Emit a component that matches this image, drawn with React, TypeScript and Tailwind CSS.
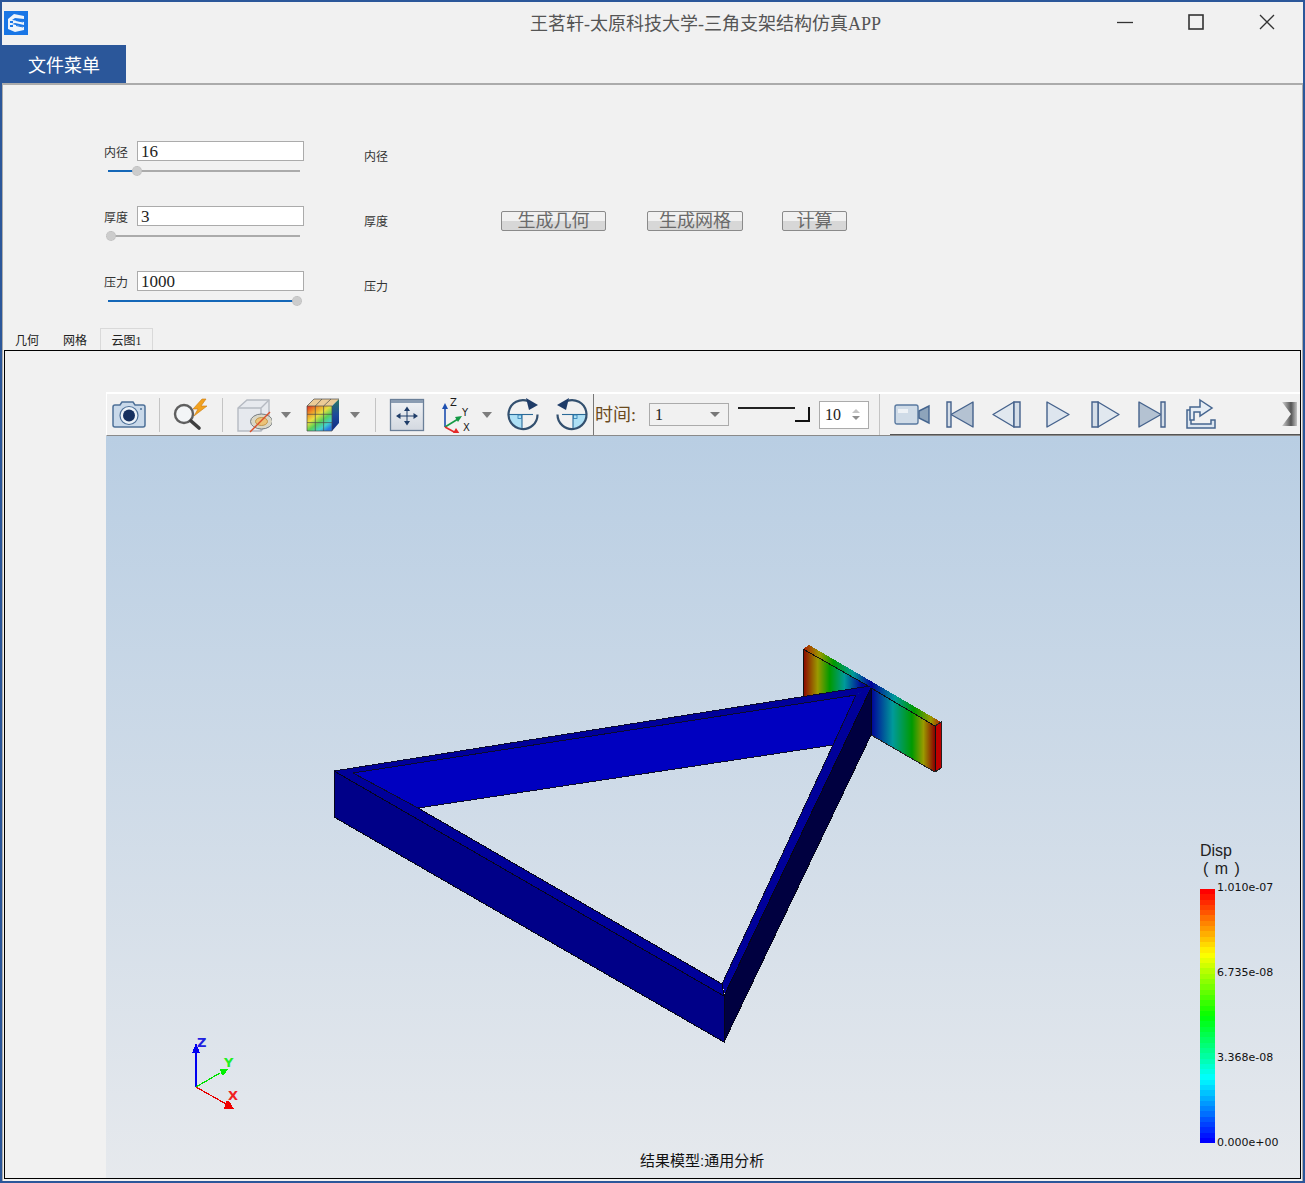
import React from "react";

const serif = "font-['Liberation_Serif','Noto_Sans_CJK_SC',serif]";
const sans = "font-['Liberation_Sans','Noto_Sans_CJK_SC',sans-serif]";

const Caret = ({ ml }: { ml: string }) => (
  <div className={`${ml} w-0 h-0 border-x-[5px] border-x-transparent border-t-[6px] border-t-[#7d7d7d]`} />
);

const Sep = ({ ml }: { ml: string }) => <div className={`${ml} w-px h-[34px] bg-[#c4c4c4]`} />;

const Logo = () => (
  <svg width="24" height="24" viewBox="0 0 24 24" shapeRendering="crispEdges">
    <rect width="24" height="24" fill="#1976e6" />
    <path d="M4 8 L10 3 L20 5 L20 8 L11 7 L8 9 L20 11 L20 14 L11 12 L8 13 L20 16 L20 19 L11 21 L4 18 Z" fill="#eef4fb" shapeRendering="auto" />
    <path d="M6 10h3v2H6zM6 14h3v2H6z" fill="#1976e6" />
    <path d="M12 9.5l7 1.5M12 14.5l7 1.5" stroke="#1976e6" strokeWidth="1" shapeRendering="auto" />
  </svg>
);

const CameraIcon = () => (
  <svg width="36" height="36" viewBox="0 0 36 36">
    <path d="M2 10 Q2 8 4 8 H9 L11 5 H22 L24 8 H32 Q34 8 34 10 V28 Q34 30 32 30 H4 Q2 30 2 28 Z" fill="#c9d9ea" stroke="#4d7098" strokeWidth="1.5" />
    <circle cx="18" cy="18.5" r="9" fill="#edf3f9" stroke="#4d7098" strokeWidth="1.2" />
    <circle cx="18" cy="18.5" r="6" fill="#16305f" />
    <circle cx="30" cy="12" r="1" fill="#4d7098" />
  </svg>
);

const SearchIcon = () => (
  <svg width="36" height="36" viewBox="0 0 36 36">
    <circle cx="11" cy="17" r="9" fill="#f3f5f7" stroke="#5f5f5f" strokeWidth="2.4" />
    <path d="M18 24 L26 31" stroke="#3f3f3f" strokeWidth="3.6" strokeLinecap="round" />
    <path d="M29 2 L20 12 L25 12 L21 19 L34 9 L28 9 L33 2 Z" fill="#f2a21f" stroke="#c97a10" strokeWidth="0.6" />
  </svg>
);

const HideIcon = () => (
  <svg width="36" height="36" viewBox="0 0 36 36">
    <path d="M2 11 L11 3 H33 V24 L25 34 H2 Z" fill="#e6e9ee" stroke="#b5bac2" strokeWidth="1.4" />
    <path d="M2 11 H25 V34 M25 11 L33 3" fill="none" stroke="#b5bac2" strokeWidth="1.4" />
    <ellipse cx="25.5" cy="24.5" rx="11" ry="7.5" fill="#d9d6c6" stroke="#757c83" strokeWidth="1" />
    <ellipse cx="25.5" cy="24.5" rx="6" ry="4" fill="#ecc277" stroke="#b88a3a" strokeWidth="0.8" />
    <path d="M14 35 L34 15" stroke="#d9502a" strokeWidth="1.5" />
  </svg>
);

const ColorCube = () => (
  <svg width="36" height="36" viewBox="0 0 36 36">
    <defs>
      <linearGradient id="cubeFront" x1="0" y1="0" x2="0.75" y2="1">
        <stop offset="0" stopColor="#e02a20" />
        <stop offset="0.25" stopColor="#f09a28" />
        <stop offset="0.45" stopColor="#e8e040" />
        <stop offset="0.65" stopColor="#58d058" />
        <stop offset="0.85" stopColor="#40d0d0" />
        <stop offset="1" stopColor="#2a78e0" />
      </linearGradient>
      <linearGradient id="cubeSide" x1="0" y1="0" x2="0" y2="1">
        <stop offset="0" stopColor="#2a7a60" />
        <stop offset="0.5" stopColor="#1c4a9c" />
        <stop offset="1" stopColor="#102a80" />
      </linearGradient>
    </defs>
    <path d="M2 9 L9 2 H34 L27 9 Z" fill="#eccb96" />
    <path d="M27 9 L34 2 V26 L27 34 Z" fill="url(#cubeSide)" />
    <rect x="2" y="9" width="25" height="25" fill="url(#cubeFront)" />
    <path d="M2 9H27V34H2ZM10.3 9V34M18.6 9V34M2 17.3H27M2 25.6H27M9 2 L2 9M17 2 L10.3 9M26 2 L18.6 9M9 2H34" stroke="#4a4a4a" strokeWidth="0.7" fill="none" />
  </svg>
);

const MoveIcon = () => (
  <svg width="36" height="36" viewBox="0 0 36 36">
    <defs>
      <linearGradient id="moveBg" x1="0" y1="0" x2="0" y2="1">
        <stop offset="0" stopColor="#f1f3f6" />
        <stop offset="1" stopColor="#d3d8e0" />
      </linearGradient>
    </defs>
    <rect x="1.5" y="2.5" width="33" height="31" fill="url(#moveBg)" stroke="#6a7f98" strokeWidth="1.3" />
    <rect x="2" y="3" width="32" height="3" fill="#8a9cb2" />
    <path d="M18 13 V25 M11 19 H25" stroke="#1f3c68" strokeWidth="1" />
    <path d="M18 9.5 L15 14 H21 Z M18 28.5 L15 24 H21 Z M7 19 L11.5 16 V22 Z M29 19 L24.5 16 V22 Z" fill="#1f3c68" />
  </svg>
);

const AxesIcon = () => (
  <svg width="32" height="36" viewBox="0 0 32 36">
    <path d="M4 30 V11" stroke="#1d4fb0" strokeWidth="1.6" />
    <path d="M4 6 L1 12 H7 Z" fill="#1d4fb0" />
    <path d="M4 30 L17 22" stroke="#159a45" strokeWidth="1.6" />
    <path d="M21 19 L14 20 L17 25 Z" fill="#159a45" />
    <path d="M4 30 L15 36" stroke="#e42a2a" strokeWidth="1.6" />
    <path d="M19 37 L12 36 L15 31 Z" fill="#e42a2a" />
    <text x="9" y="9" fontSize="10" fontFamily="DejaVu Sans" fill="#1c1c1c">Z</text>
    <text x="21" y="19" fontSize="10" fontFamily="DejaVu Sans" fill="#1c1c1c">Y</text>
    <text x="22" y="34" fontSize="10" fontFamily="DejaVu Sans" fill="#1c1c1c">X</text>
  </svg>
);

const RotateIcon = ({ flip }: { flip?: boolean }) => (
  <svg width="36" height="36" viewBox="0 0 36 36" className={flip ? "-scale-x-100" : ""}>
    <path d="M3 17.5 H16 V32 A14.5 14.5 0 0 1 3 17.5 Z" fill="#aee0f5" />
    <path d="M3 17.5 H27" stroke="#2a6a98" strokeWidth="1.1" />
    <path d="M16 17.5 V32" stroke="#2a6a98" strokeWidth="1.1" />
    <rect x="12" y="18" width="3.5" height="3.5" fill="none" stroke="#2a7ab0" strokeWidth="0.8" />
    <path d="M22 4 A14.5 14.5 0 1 0 31.5 17.5" fill="none" stroke="#33506f" strokeWidth="2.2" />
    <path d="M20 1 L32 8 L23 13 Z" fill="#1f3c68" />
  </svg>
);

const VideoIcon = () => (
  <svg width="36" height="36" viewBox="0 0 36 36">
    <rect x="1" y="9" width="23" height="19" rx="2" fill="#cfdbe7" stroke="#5a7aa0" strokeWidth="1.4" />
    <rect x="4" y="13" width="10" height="4" fill="#eef2f6" />
    <path d="M25 15 L35 10 V27 L25 22 Z" fill="#8ea4bb" stroke="#45658f" strokeWidth="1.4" />
  </svg>
);

const MediaIcon = ({ d, bar, fill }: { d: string; bar: string; fill: string }) => (
  <svg width="36" height="36" viewBox="0 0 36 36">
    <path d={d} fill={fill} stroke="#45628c" strokeWidth="1.4" strokeLinejoin="round" />
    <path d={bar} fill="#d5dee8" stroke="#45628c" strokeWidth="1.4" />
  </svg>
);

const ExportIcon = () => (
  <svg width="36" height="36" viewBox="0 0 36 36">
    <path d="M5 14 V32 H33 V24 H29 V28 H9 V14 Z" fill="#dce6f0" stroke="#45658f" strokeWidth="1.5" />
    <path d="M18 4 L30 12 L18 20 V16 H12 V24 H8 V11 H18 Z" fill="#e6edf4" stroke="#45658f" strokeWidth="1.5" />
  </svg>
);

const Model = () => (
  <svg viewBox="106 436 1194 742" className="absolute inset-0 w-full h-full" shapeRendering="crispEdges">
    <defs>
      <linearGradient id="plateL" gradientUnits="userSpaceOnUse" x1="803" y1="0" x2="870" y2="0">
        <stop offset="0" stopColor="#8c0000" />
        <stop offset="0.22" stopColor="#9a9a00" />
        <stop offset="0.4" stopColor="#009a00" />
        <stop offset="0.62" stopColor="#009a9a" />
        <stop offset="0.88" stopColor="#000099" />
        <stop offset="1" stopColor="#000099" />
      </linearGradient>
      <linearGradient id="plateR" gradientUnits="userSpaceOnUse" x1="871" y1="0" x2="935" y2="0">
        <stop offset="0" stopColor="#000099" />
        <stop offset="0.34" stopColor="#009a9a" />
        <stop offset="0.64" stopColor="#009a00" />
        <stop offset="0.82" stopColor="#9a9a00" />
        <stop offset="1" stopColor="#8c0000" />
      </linearGradient>
      <linearGradient id="plateT" gradientUnits="userSpaceOnUse" x1="803" y1="0" x2="942" y2="0">
        <stop offset="0" stopColor="#aa1800" />
        <stop offset="0.12" stopColor="#9a9a00" />
        <stop offset="0.22" stopColor="#009a00" />
        <stop offset="0.36" stopColor="#009a9a" />
        <stop offset="0.49" stopColor="#000099" />
        <stop offset="0.66" stopColor="#009a9a" />
        <stop offset="0.8" stopColor="#009a00" />
        <stop offset="0.92" stopColor="#9a9a00" />
        <stop offset="1" stopColor="#aa1800" />
      </linearGradient>
    </defs>

    {/* plate */}
    <polygon points="803,649 809,645 941,722 935,726" fill="url(#plateT)" />
    <polygon points="803,649 870,687 856,696 803,704" fill="url(#plateL)" />
    <polygon points="871,688 935,726 935,772 871,735" fill="url(#plateR)" />
    <polygon points="935,726 941,722 941,768 935,772" fill="#bf0000" />
    <path d="M803 649 L870 687 M871 688 L935 726 V772 M803 649 V696" stroke="#111" fill="none" />
    <path d="M871 735 L935 772 L941 768 V722 L935 726" stroke="#222" fill="none" />

    {/* inner bright face of the top bar */}
    <polygon points="353,773 856,695 833,745 418,808" fill="#0000c0" />

    {/* top strip */}
    <polygon points="335,771 870,686 856,695 353,773" fill="#00009a" />
    {/* lower bar */}
    <polygon points="335,771 353,773 418,808 722,984 724,996" fill="#00009a" />
    <polygon points="334,771 724,996 724,1042 334,817" fill="#000088" />
    {/* right bar */}
    <polygon points="873,686 856,695 833,745 722,984 726,998" fill="#00009a" />
    <polygon points="871,688 871,735 724,1042 724,996" fill="#000040" />

    <path d="M334 771 L870 686 M353 773 L856 695 M353 773 L418 808 M418 808 L833 745 M833 745 L722 984 M856 695 L833 745" stroke="#0a0a30" fill="none" />
    <path d="M418 808 L722 984 L724 996 L334 771 V817 L724 1042 V996 L871 688 V735 L724 1042" stroke="#05051c" fill="none" />

    {/* orientation triad */}
    <path d="M196 1087 V1050" stroke="#0000f0" strokeWidth="1.4" />
    <path d="M196 1043 L192 1053 H200 Z" fill="#0000f0" />
    <path d="M196 1087 L220 1073" stroke="#00e000" strokeWidth="1.2" />
    <path d="M220 1069 H228 L225 1074 L222 1075 Z" fill="#00f000" />
    <path d="M196 1087 L226 1104" stroke="#e80000" strokeWidth="1.2" />
    <path d="M226 1101 L229 1101 L234 1109 H224 Z" fill="#f00000" />
    <text x="197" y="1047" fontSize="13" fontWeight="bold" fontFamily="DejaVu Sans" fill="#2020e0" shapeRendering="auto">Z</text>
    <text x="224" y="1067" fontSize="13" fontWeight="bold" fontFamily="DejaVu Sans" fill="#22ee22" shapeRendering="auto">Y</text>
    <text x="228" y="1100" fontSize="13" fontWeight="bold" fontFamily="DejaVu Sans" fill="#f02020" shapeRendering="auto">X</text>
  </svg>
);

const bands = Array.from({ length: 48 }, (_, i) => Math.round((i / 47) * 240));

const Legend = () => (
  <div className="absolute left-[1094px] top-[405px] w-[100px] text-[#111] font-['DejaVu_Sans',sans-serif]">
    <div className={`${sans} text-[16px] leading-[20px] text-[#222]`}>Disp</div>
    <div className={`${sans} ml-[3px] text-[16px] leading-[15px] text-[#222] whitespace-pre tracking-[1px]`}>( m )</div>
    <div className="relative mt-[13px] w-[15px] h-[254px] flex flex-col">
      {bands.map((h) => (
        <div key={h} className="flex-1" style={{ backgroundColor: `hsl(${h},100%,50%)` }} />
      ))}
      <span className="absolute left-[17px] top-[-9px] text-[11px] leading-[16px] whitespace-nowrap">1.010e-07</span>
      <span className="absolute left-[17px] top-[76px] text-[11px] leading-[16px] whitespace-nowrap">6.735e-08</span>
      <span className="absolute left-[17px] top-[161px] text-[11px] leading-[16px] whitespace-nowrap">3.368e-08</span>
      <span className="absolute left-[17px] top-[246px] text-[11px] leading-[16px] whitespace-nowrap">0.000e+00</span>
    </div>
  </div>
);

const Field = ({ label, value, thumb, hint }: { label: string; value: string; thumb: string; hint: string }) => (
  <div className="h-[65px] flex">
    <div className="w-[200px]">
      <div className="flex items-center h-[20px]">
        <span className={`${sans} text-[12px] w-[33px] pt-[3px] text-[#333]`}>{label}</span>
        <div className={`${serif} w-[167px] h-[20px] bg-white border border-[#ababab] pl-[3px] text-[17px] leading-[20px] text-[#222]`}>{value}</div>
      </div>
      <div className="relative ml-[4px] mt-[9px] w-[192px] h-[2px] bg-[#ababab]">
        <div className={`${thumb} h-full bg-[#1567b8]`} />
        <div className={`absolute top-[-4px] ${thumb === "w-[3px]" ? "left-[-2px]" : thumb === "w-[29px]" ? "left-[24px]" : "left-[184px]"} w-[10px] h-[10px] rounded-full bg-[#cccccc] border border-dotted border-[#bbb]`} />
      </div>
    </div>
    <span className={`${sans} ml-[60px] mt-[6px] text-[12px] leading-[20px] text-[#333] h-[20px]`}>{hint}</span>
  </div>
);

const Btn = ({ w, ml, children }: { w: string; ml: string; children: React.ReactNode }) => (
  <div className={`${w} ${ml} ${sans} h-[20px] rounded-[2px] border border-[#8a8a8a] bg-[linear-gradient(to_bottom,#f1f1f1_0%,#f1f1f1_52%,#d7d7d7_52%,#d7d7d7_100%)] text-[18px] leading-[18px] text-center text-[#6a6a6a]`}>
    {children}
  </div>
);

const App = () => {
  return (
    <div className="w-[1305px] h-[1183px] bg-[#f1f1f1] border-x-2 border-t-2 border-b-2 border-[#2b579a] flex flex-col overflow-hidden">
      {/* title bar */}
      <div className="h-[43px] flex shrink-0">
        <div className="ml-[2px] mt-[9px]"><Logo /></div>
        <div className={`${serif} ml-[502px] mt-[10px] text-[18px] leading-[24px] text-[#555] whitespace-nowrap`}>王茗轩-太原科技大学-三角支架结构仿真APP</div>
        <div className="ml-auto flex items-start mt-[12px] mr-[28px] gap-[55px]">
          <svg width="16" height="16" viewBox="0 0 16 16"><path d="M0 8.5H16" stroke="#333" strokeWidth="1.3" /></svg>
          <svg width="16" height="16" viewBox="0 0 16 16"><rect x="1" y="1" width="14" height="14" fill="none" stroke="#333" strokeWidth="1.6" /></svg>
          <svg width="16" height="16" viewBox="0 0 16 16"><path d="M1 1L15 15M15 1L1 15" stroke="#333" strokeWidth="1.3" /></svg>
        </div>
      </div>
      {/* menu */}
      <div className="h-[38px] shrink-0 flex">
        <div className={`${sans} w-[124px] bg-[#2b579a] text-white text-[18px] leading-[42px] text-center`}>文件菜单</div>
      </div>
      {/* panel */}
      <div className="flex-1 min-h-0 flex flex-col border-t-2 border-l border-r border-[#ababab]">
        <div className="h-[243px] shrink-0 pl-[101px] pt-[56px] flex items-start">
          <div className="w-[300px]">
            <Field label="内径" value="16" thumb="w-[29px]" hint="内径" />
            <Field label="厚度" value="3" thumb="w-[3px]" hint="厚度" />
            <Field label="压力" value="1000" thumb="w-[189px]" hint="压力" />
          </div>
          <div className="flex mt-[70px] ml-[97px]">
            <Btn w="w-[105px]" ml="">生成几何</Btn>
            <Btn w="w-[96px]" ml="ml-[41px]">生成网格</Btn>
            <Btn w="w-[65px]" ml="ml-[39px]">计算</Btn>
          </div>
        </div>
        {/* tabs */}
        <div className={`${sans} h-[22px] shrink-0 flex items-end text-[12px] text-[#222]`}>
          <div className="w-[12px]" />
          <div className="w-[24px] h-[20px] leading-[23px]">几何</div>
          <div className="w-[24px] ml-[24px] h-[20px] leading-[23px]">网格</div>
          <div className="w-[53px] ml-[13px] h-[22px] border border-b-0 border-[#d9d9d9] text-center leading-[24px]">云图<span className={serif}>1</span></div>
        </div>
        {/* tab pane */}
        <div className="h-[829px] shrink-0 mx-px border border-black pt-[41px] pl-[101px] flex flex-col">
          {/* toolbar */}
          <div className="h-[44px] shrink-0 flex items-center border-t-2 border-l border-t-white border-l-white border-b border-b-[#8a8a8a]">
            <div className="ml-[4px]"><CameraIcon /></div>
            <Sep ml="ml-[12px]" />
            <div className="ml-[13px]"><SearchIcon /></div>
            <Sep ml="ml-[13px]" />
            <div className="ml-[13px]"><HideIcon /></div>
            <Caret ml="ml-[9px]" />
            <div className="ml-[14px]"><ColorCube /></div>
            <Caret ml="ml-[9px]" />
            <Sep ml="ml-[15px]" />
            <div className="ml-[13px]"><MoveIcon /></div>
            <div className="ml-[16px]"><AxesIcon /></div>
            <Caret ml="ml-[9px]" />
            <div className="ml-[14px]"><RotateIcon /></div>
            <div className="ml-[11px]"><RotateIcon flip /></div>
            <div className="ml-[4px] w-px h-full bg-[#777]" />
            <div className={`${serif} ml-[1px] w-[48px] pt-[2px] text-[18px] text-[#6b4a1e] whitespace-nowrap`}>时间:</div>
            <div className={`${serif} ml-[6px] w-[80px] h-[23px] border border-[#ababab] flex items-center pl-[5px] pr-[8px] text-[16px] text-[#222]`}>
              1
              <div className="ml-auto w-0 h-0 border-x-[5px] border-x-transparent border-t-[5px] border-t-[#777]" />
            </div>
            <div className="ml-[9px] w-[72px] h-[15px] flex items-start">
              <div className="w-[57px] h-[2px] bg-[#222]" />
              <div className="w-[15px] h-[15px] border-r-2 border-b-2 border-[#111]" />
            </div>
            <div className={`${serif} ml-[9px] w-[50px] h-[28px] bg-white border border-[#ababab] flex items-center pl-[5px] text-[16px] text-[#222]`}>
              10
              <div className="ml-auto mr-[8px] flex flex-col gap-[3px]">
                <div className="w-0 h-0 border-x-[4px] border-x-transparent border-b-[4px] border-b-[#c4c4c4]" />
                <div className="w-0 h-0 border-x-[4px] border-x-transparent border-t-[4px] border-t-[#8f8f8f]" />
              </div>
            </div>
            <div className="ml-[10px] w-px h-full bg-[#c4c4c4]" />
            <div className="ml-[10px] flex-1 h-full flex items-center border-b border-b-[#555] pl-[4px] pr-[3px]">
              <div className="flex gap-[12px]">
                <VideoIcon />
                <MediaIcon fill="#b4c2d2" bar="M5 6H9V31H5Z" d="M31 6 V31 L9 18.5 Z" />
                <MediaIcon fill="#e1e8ef" bar="M24 6H30V31H24Z" d="M24 6 V31 L3 18.5 Z" />
                <MediaIcon fill="#dde5ee" bar="M9 18H9" d="M9 6 V31 L31 18.5 Z" />
                <MediaIcon fill="#e1e8ef" bar="M6 6H12V31H6Z" d="M12 6 V31 L33 18.5 Z" />
                <MediaIcon fill="#b4c2d2" bar="M27 6H31V31H27Z" d="M5 6 V31 L27 18.5 Z" />
                <ExportIcon />
              </div>
              <div className="ml-auto w-[15px] h-[24px] bg-[linear-gradient(to_right,#d0d0d0,#555_60%,#c4c4c4)] [clip-path:polygon(0_0,100%_0,100%_100%,0_100%,60%_50%)]" />
            </div>
          </div>
          {/* result view */}
          <div className="relative flex-1 min-h-0 bg-[linear-gradient(to_bottom,#b9cee3_0%,#e6e9ed_100%)]">
            <Model />
            <Legend />
            <div className={`${sans} absolute bottom-[7px] left-[534px] text-[15px] leading-[20px] text-[#111]`}>结果模型:通用分析</div>
          </div>
        </div>
      </div>
    </div>
  );
};

export default App;
